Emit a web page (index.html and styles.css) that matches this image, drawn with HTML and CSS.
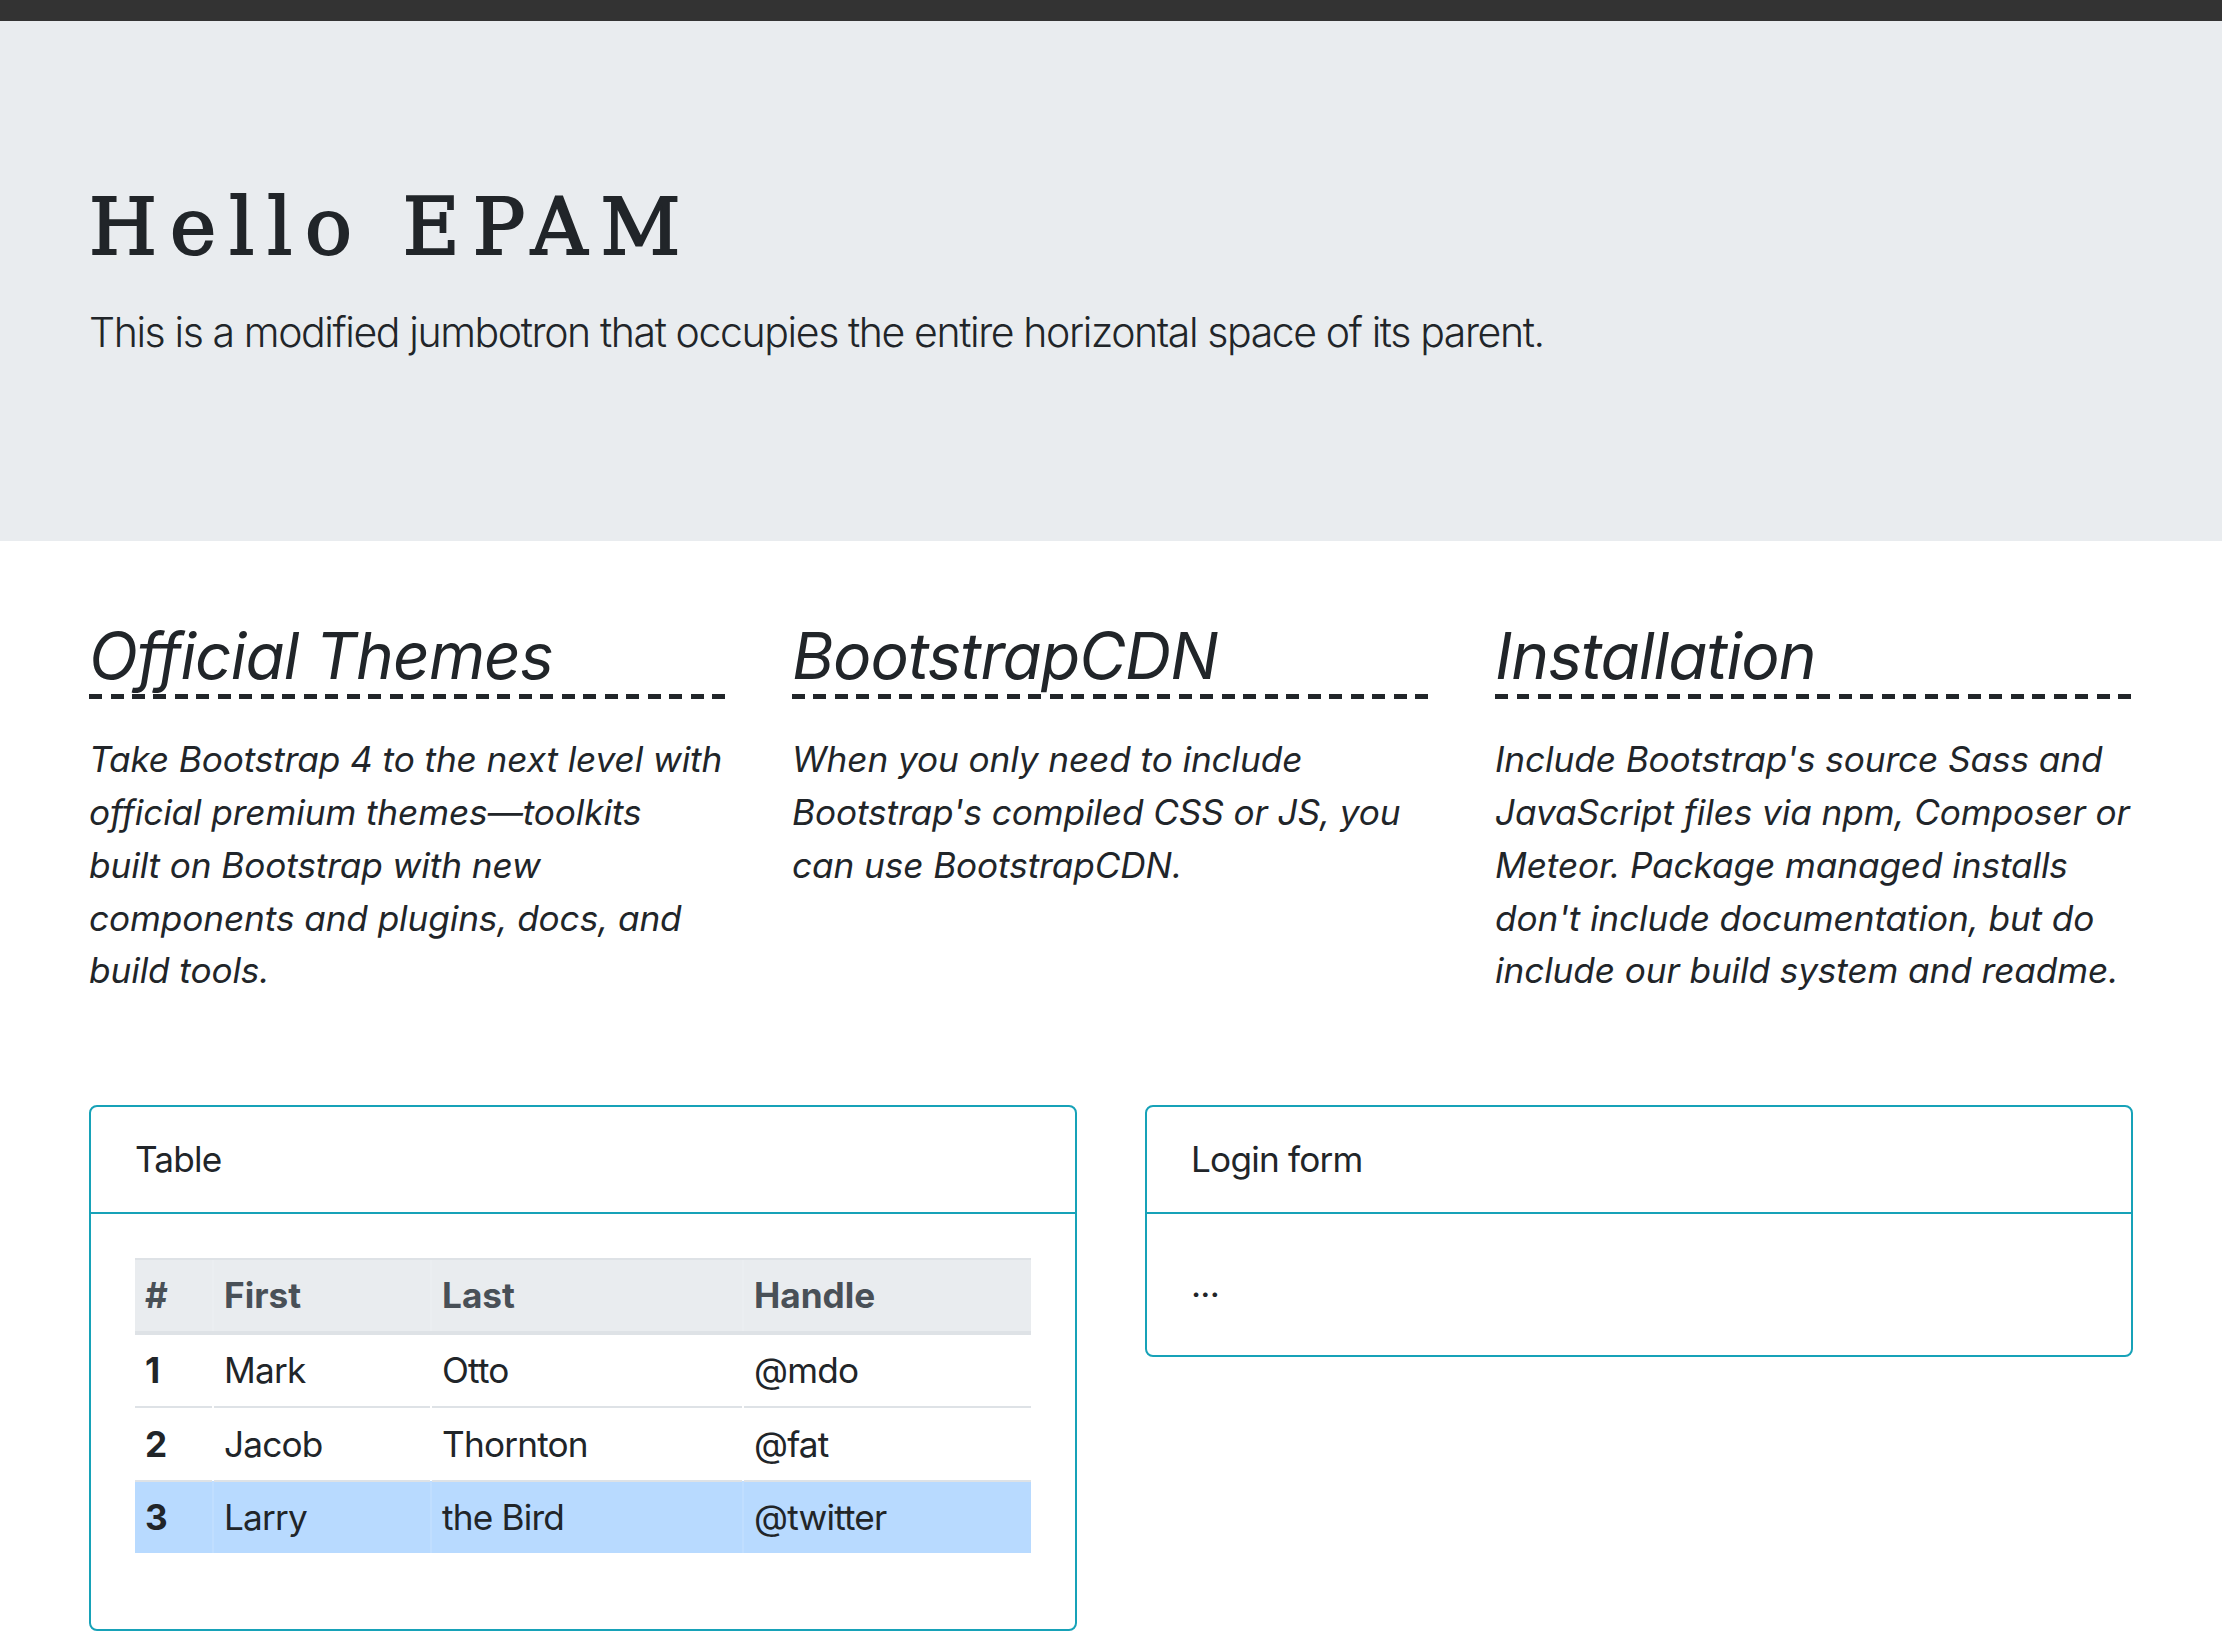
FILE: index.html
```html
<!DOCTYPE html>
<html lang="en">
<head>
<meta charset="utf-8">
<title>Hello EPAM</title>
<link rel="stylesheet" href="styles.css">
</head>
<body>
<div class="topbar"></div>
<header class="jumbotron">
  <div class="container">
    <h1 class="display">Hello EPAM</h1>
    <p class="lead">This is a modified jumbotron that occupies the entire horizontal space of its parent.</p>
  </div>
</header>
<main class="container">
  <section class="features">
    <div class="feature">
      <h2 class="feature-title">Official Themes</h2>
      <p class="feature-text">Take Bootstrap 4 to the next level with<br>official premium themes—toolkits<br>built on Bootstrap with new<br>components and plugins, docs, and<br>build tools.</p>
    </div>
    <div class="feature">
      <h2 class="feature-title">BootstrapCDN</h2>
      <p class="feature-text">When you only need to include<br>Bootstrap's compiled CSS or JS, you<br>can use BootstrapCDN.</p>
    </div>
    <div class="feature">
      <h2 class="feature-title">Installation</h2>
      <p class="feature-text">Include Bootstrap's source Sass and<br>JavaScript files via npm, Composer or<br>Meteor. Package managed installs<br>don't include documentation, but do<br>include our build system and readme.</p>
    </div>
  </section>
  <section class="cards">
    <div class="card">
      <div class="card-header">Table</div>
      <div class="card-body">
        <table class="table">
          <colgroup>
            <col class="c-num"><col class="c-first"><col class="c-last"><col class="c-handle">
          </colgroup>
          <thead>
            <tr><th>#</th><th>First</th><th>Last</th><th>Handle</th></tr>
          </thead>
          <tbody>
            <tr><th>1</th><td>Mark</td><td>Otto</td><td>@mdo</td></tr>
            <tr><th>2</th><td>Jacob</td><td>Thornton</td><td>@fat</td></tr>
            <tr class="row-primary"><th>3</th><td>Larry</td><td>the Bird</td><td>@twitter</td></tr>
          </tbody>
        </table>
      </div>
    </div>
    <div class="card">
      <div class="card-header">Login form</div>
      <div class="card-body">...</div>
    </div>
  </section>
</main>
</body>
</html>
```
FILE: styles.css
```css
html, body {
  margin: 0;
  padding: 0;
}
body {
  font-family: Inter, "Liberation Sans", sans-serif;
  font-size: 35.2px;
  line-height: 1.5;
  color: #212529;
  background: #fff;
}
.topbar {
  height: 21px;
  background: #333333;
}
.container {
  padding: 0 89px;
}
.jumbotron {
  background: #e9ecef;
  padding: 146px 0 142px;
  margin-bottom: 77px;
}
.display {
  margin: 0 0 15px;
  font-family: "DejaVu Serif", "Liberation Serif", serif;
  font-weight: 400;
  font-size: 78px;
  line-height: 120px;
  letter-spacing: 13px;
  -webkit-text-stroke: 2px #212529;
}
.lead {
  margin: 0 0 35px;
  font-size: 41px;
  font-weight: 300;
  letter-spacing: -1.4px;
  line-height: 1.5;
}
.features {
  display: grid;
  grid-template-columns: repeat(3, 1fr);
  column-gap: 65px;
}
.feature-title {
  margin: 0 0 34px;
  padding-bottom: 5px;
  font-size: 64px;
  font-weight: 400;
  font-style: italic;
  letter-spacing: -0.9px;
  line-height: 1.2;
  background: repeating-linear-gradient(to right, #212529 0 13px, transparent 13px 21.5px) left bottom / 100% 5px no-repeat;
}
.feature-text {
  margin: 0 0 32px;
  font-style: italic;
  font-size: 35.2px;
  letter-spacing: -0.1px;
  white-space: nowrap;
}
.cards {
  display: grid;
  grid-template-columns: repeat(2, 1fr);
  column-gap: 68px;
  align-items: start;
  margin-top: 76px;
}
.card {
  border: 2px solid #17a2b8;
  border-radius: 8px;
}
.card-header {
  padding: 26px 44px;
  border-bottom: 2px solid #17a2b8;
  letter-spacing: -0.8px;
}
.card-body {
  padding: 44px;
  letter-spacing: -0.8px;
}
.table {
  width: 100%;
  border-collapse: collapse;
  margin-bottom: 32px;
}
.c-num { width: 78px; }
.c-first { width: 218px; }
.c-last { width: 312px; }
.table th, .table td {
  padding: 9.2px 10px;
  text-align: left;
  border-top: 2px solid #dee2e6;
  vertical-align: top;
}
.table th + th, .table td {
  border-left: 2px solid rgba(255, 255, 255, 0.12);
}
.table th {
  font-weight: 700;
  letter-spacing: 0;
}
.table thead th {
  background: #e9ecef;
  color: #495057;
  border-bottom: 4px solid #dee2e6;
}
.row-primary th, .row-primary td {
  background: #b8daff;
}
```
